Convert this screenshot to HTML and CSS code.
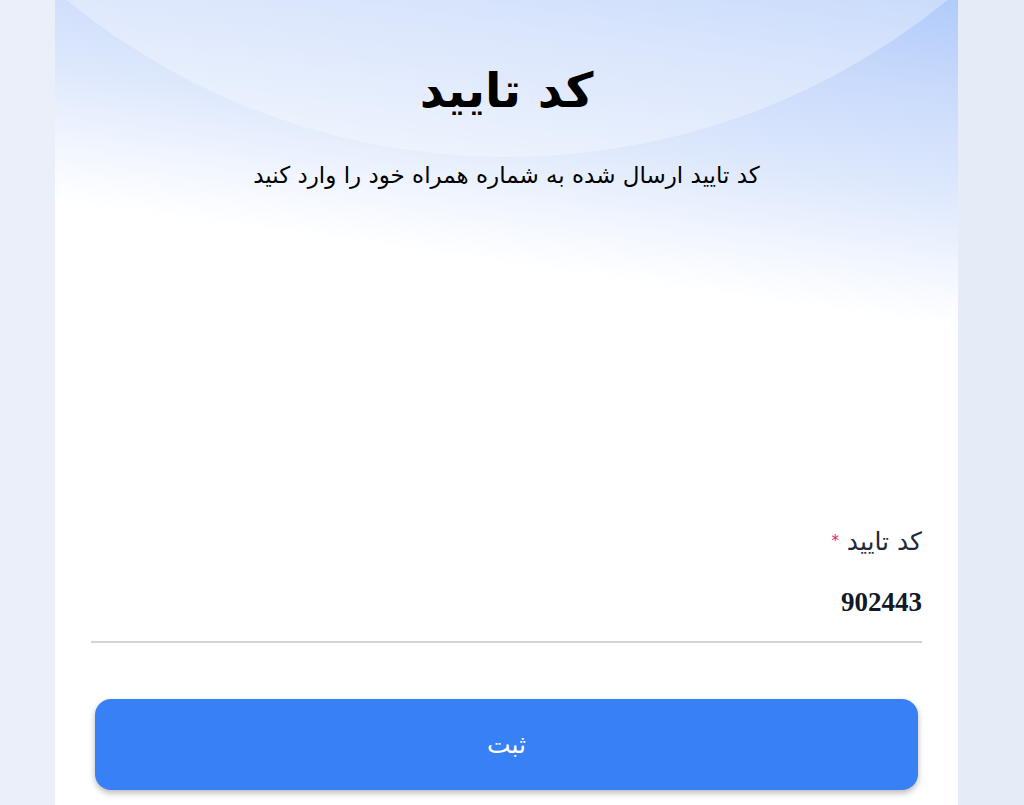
FILE: index.html
```html
<!DOCTYPE html>
<html lang="fa" dir="rtl">
<head>
<meta charset="utf-8">
<title>کد تایید</title>
<link rel="stylesheet" href="styles.css">
</head>
<body>
<main class="page">
  <section class="card">
    <div class="hero">
      <h1 class="title">کد تایید</h1>
      <p class="subtitle">کد تایید ارسال شده به شماره همراه خود را وارد کنید</p>
    </div>
    <form class="form">
      <label class="field">
        <span class="label">کد تایید <span class="req">*</span></span>
        <input class="input" type="text" value="902443">
      </label>
      <button class="submit" type="button">ثبت</button>
    </form>
  </section>
</main>
</body>
</html>
```
FILE: styles.css
```css
html, body {
  margin: 0;
  padding: 0;
  height: 100%;
}
body {
  background: linear-gradient(90deg, #eaeff9 0%, #e6ecf7 100%);
  font-family: "DejaVu Sans", "Noto Sans", sans-serif;
  color: #111827;
  overflow: hidden;
}
.page {
  display: flex;
  padding: 0 66px 0 55px;
  height: 100%;
  box-sizing: border-box;
}
.card {
  flex: 1;
  position: relative;
  overflow: hidden;
  background: linear-gradient(188deg, #b1cbfa 0px, #c9dafb 90px, #dde8fc 190px, #f2f6fe 270px, #ffffff 325px);
  padding: 0 36px;
}
.card::before {
  content: "";
  position: absolute;
  left: 50%;
  top: -1237px;
  width: 1394px;
  height: 1394px;
  margin-left: -697px;
  border-radius: 50%;
  background: rgba(255, 255, 255, 0.32);
}
.hero {
  position: relative;
  display: flex;
  flex-direction: column;
  align-items: center;
  padding-top: 60px;
  height: 470px;
  box-sizing: border-box;
}
.title {
  margin: 0;
  font-size: 48px;
  font-weight: 700;
  line-height: 60px;
  color: #000;
}
.subtitle {
  margin: 40px 0 0;
  font-size: 23px;
  line-height: 30px;
  color: #000;
}
.form {
  position: relative;
  display: flex;
  flex-direction: column;
}
.field {
  display: flex;
  flex-direction: column;
  border-bottom: 2px solid #d4d4d8;
}
.label {
  font-size: 25px;
  line-height: 28px;
  color: #1e293b;
  padding-top: 57px;
}
.req {
  color: #db2777;
  font-size: 15px;
  vertical-align: 4px;
}
.input {
  border: none;
  background: transparent;
  outline: none;
  direction: rtl;
  text-align: right;
  font-family: "Liberation Serif", serif;
  font-weight: 700;
  font-size: 27px;
  line-height: 32px;
  height: 32px;
  color: #111827;
  padding: 30px 0 23px;
  margin: 0;
}
.submit {
  margin: 56px 4px 0;
  height: 91px;
  border: none;
  border-radius: 16px;
  background: #3880f5;
  color: #fff;
  font-family: "DejaVu Sans", sans-serif;
  font-size: 25px;
  box-shadow: 0 3px 6px rgba(0, 0, 0, 0.28);
}
```
